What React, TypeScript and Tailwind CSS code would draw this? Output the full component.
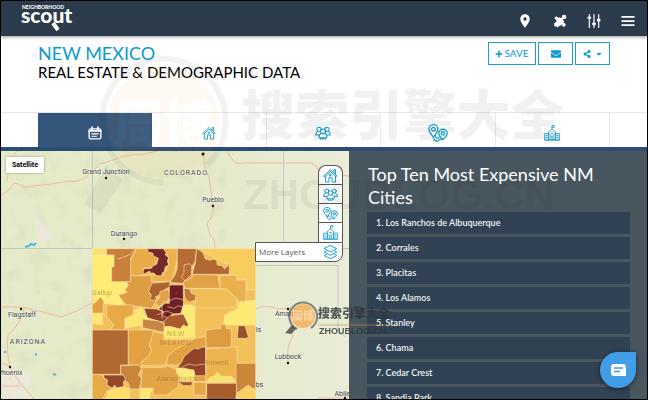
import type { ReactNode } from 'react'
import { FaCaretDown, FaEnvelope, FaPlus, FaShareAlt } from 'react-icons/fa'
import { MdLocationOn } from 'react-icons/md'

interface IconProps {
  className?: string
}

function Icon({ className, children }: IconProps & { children: ReactNode }) {
  return (
    <svg
      className={className}
      viewBox="0 0 24 24"
      fill="none"
      stroke="currentColor"
      strokeWidth="1.6"
      strokeLinejoin="round"
      strokeLinecap="round"
      aria-hidden="true"
    >
      {children}
    </svg>
  )
}

function HomeIcon({ className }: IconProps) {
  return (
    <Icon className={className}>
      <path d="M4 13v9.500h5.500v-7h5v7H20V13" />
      <path d="M1.500 12.500 12 2.500l10.500 10-1.500 1.500L12 5.500 3 14z" />
      <path d="M17.500 7V2.500H20V9.500M11 10.500h2v2h-2z" />
    </Icon>
  )
}

function PeopleIcon({ className }: IconProps) {
  return (
    <Icon className={className}>
      <circle cx="6" cy="6.500" r="3.200" />
      <circle cx="18" cy="6.500" r="3.200" />
      <circle cx="12" cy="9.500" r="3.600" />
      <path d="M4.500 9.500C2 10.500 1 12 1 15h5M19.500 9.500c2.500 1 3.500 2.500 3.500 5.500h-5" />
      <path d="M9.500 12.500C7 13.500 6 15.500 6 19h12c0-3.500-1-5.500-3.500-6.500M8 19v2h8v-2" />
    </Icon>
  )
}

function RouteIcon({ className }: IconProps) {
  return (
    <Icon className={className}>
      <path d="M6.500 17C3 12.500 1 10 1 7.500a5.500 5.500 0 0 1 11 0c0 2.500-2 5-5.500 9.500z" />
      <circle cx="6.500" cy="7.500" r="2.200" />
      <path d="M17.500 20c-3-3.500-4.500-5-4.500-7.500a4.900 4.900 0 0 1 10 0c0 2.500-2 4.500-5.500 7.500z" />
      <circle cx="17.800" cy="12.500" r="2" />
      <path d="M6.500 17c1 5 4 6 6.500 3.500 1.500-1.500 3-1.500 4.500-.5M9 15c.5 4 2 4 4 2" />
    </Icon>
  )
}

function SchoolIcon({ className }: IconProps) {
  return (
    <Icon className={className}>
      <path d="M1 22V13h6v9zM17 22v-9h6v9zM7 22V10l5-4 5 4v12zM0 22.500h24" strokeWidth="1.300" />
      <path d="M12 6V1h3.500v2.500H12M10.500 22v-5h3v5M10.500 12h3M3 16h2M3 19h2M19 16h2M19 19h2M9 15h1M14 15h1" strokeWidth="1.300" />
    </Icon>
  )
}

function LayersIcon({ className }: IconProps) {
  return (
    <Icon className={className}>
      <path d="m12 1 10 5-10 5L2 6z" />
      <path d="m5.500 9.500L2 11.500l10 5 10-5-3.500-2" />
      <path d="m5.500 15L2 17l10 5 10-5-3.500-2" />
    </Icon>
  )
}

function OverviewIcon({ className }: IconProps) {
  return (
    <Icon className={className}>
      <rect x="2" y="5" width="20" height="17" rx="2.500" strokeWidth="2.400" />
      <path d="M2 8.500h20M7 2v4M17 2v4" strokeWidth="3" />
      <path d="M6.500 13.500h11M6.500 17.500h8" strokeWidth="2" />
    </Icon>
  )
}

function PuzzleIcon({ className }: IconProps) {
  return (
    <Icon className={className}>
      <path d="M7 11.500 11.500 7l6 6L12 18.500z" fill="currentColor" strokeWidth="3" />
      <path d="M6 18l12-12M6.500 7l11.500 11" strokeWidth="4" />
      <g fill="currentColor" stroke="none">
        <circle cx="19" cy="5" r="3.800" />
        <circle cx="5.500" cy="7" r="2.800" />
        <circle cx="18.500" cy="18.500" r="3.200" />
        <path d="M1 17l5-4 6 6-4 4-2-2-2 1-2-2 1-1z" />
      </g>
    </Icon>
  )
}

function SlidersIcon({ className }: IconProps) {
  return (
    <Icon className={className}>
      <path d="M4 1v22M12 1v22M20 1v22" strokeWidth="2" />
      <path d="M3 6.500h2M11 17h2M19 10.500h2" strokeWidth="4.500" />
    </Icon>
  )
}

function Logo() {
  return (
    <a href="#" aria-label="Neighborhood Scout" className="text-white">
      <svg className="h-7 w-14 overflow-visible" viewBox="0 0 56 28" fill="currentColor" fontFamily="Lato, sans-serif">
        <text x="1" y="4" fontSize="5" fontWeight="900">NEIGHBORHOOD</text>
        <text x="0" y="18" fontSize="21" fontWeight="900">scout</text>
        <path d="m32 18 5 7" stroke="currentColor" strokeWidth="4" />
      </svg>
    </a>
  )
}

const tabs = [
  { label: 'Overview', icon: OverviewIcon, size: 'size-3.5' },
  { label: 'Real estate', icon: HomeIcon, size: 'size-3.5' },
  { label: 'Demographics', icon: PeopleIcon, size: 'size-4' },
  { label: 'Commute', icon: RouteIcon, size: 'size-5' },
  { label: 'Schools', icon: SchoolIcon, size: 'size-4' },
]

const layers = [
  { label: 'Real estate', icon: HomeIcon },
  { label: 'Demographics', icon: PeopleIcon },
  { label: 'Commute', icon: RouteIcon },
  { label: 'Schools', icon: SchoolIcon },
]

const cities = [
  'Los Ranchos de Albuquerque',
  'Corrales',
  'Placitas',
  'Los Alamos',
  'Stanley',
  'Chama',
  'Cedar Crest',
  'Sandia Park',
]

// [fill, points], drawn back to front
const regions: [string, string][] = [
  ['#f3c159', '7,11 497,11 497,470 7,470'],
  ['#fdec76', '7,30 72,30 72,110 110,110 112,122 104,135 112,142 85,150 100,165 100,180 82,182 60,175 10,178'],
  ['#f9e06a', '7,11 50,11 50,30 7,30'],
  ['#e9aa47', '138,11 172,11 178,22 190,25 205,40 195,55 190,65 160,70 160,92 122,92 122,45'],
  ['#c9803c', '50,11 138,11 122,40 122,110 65,110 65,65 72,65 72,30 50,30'],
  ['#efb24d', '220,11 262,11 262,45 256,70 245,110 185,110 185,92 218,92 235,60 235,35'],
  ['#762a28', '172,11 220,11 228,22 226,30 236,38 232,48 236,60 226,65 222,82 216,84 216,92 200,92 192,84 180,84 180,78 160,88 160,72 184,70 190,62 200,58 205,40 190,32 188,24 175,22'],
  ['#b76c34', '262,11 320,11 315,50 305,65 305,110 275,115 240,112 255,90 262,70'],
  ['#f8cc5d', '320,11 497,11 497,135 468,135 468,105 440,105 440,90 418,88 418,60'],
  ['#b16931', '320,11 330,16 340,25 346,42 362,46 370,42 380,46 382,60 396,62 404,72 418,58 418,88 305,88 316,55'],
  ['#de9c43', '122,92 185,92 185,110 210,110 178,130 178,145 200,165 185,190 130,183 115,185 100,170 85,150 112,142 104,135 115,122 110,110 122,110'],
  ['#e2a144', '305,88 385,90 385,105 390,118 390,130 285,130 280,112'],
  ['#ebb04b', '390,92 440,90 440,105 468,105 468,172 445,172 440,160 410,135 390,130'],
  ['#f1bd56', '285,130 410,132 440,160 440,188 315,188 315,165'],
  ['#fdea72', '445,172 497,165 497,240 400,240 405,210 445,190'],
  ['#e1a044', '7,178 18,170 32,155 42,170 38,205 7,205'],
  ['#fce873', '7,205 38,205 38,240 7,235'],
  ['#e8a946', '50,180 130,180 130,210 105,225 105,255 60,255 72,240 50,215'],
  ['#fce671', '105,220 130,210 135,195 155,185 165,210 185,222 190,250 155,252 155,240 105,250'],
  ['#ad6430', '185,115 240,110 240,125 218,138 210,150 196,155 200,165 180,165 184,150 176,140'],
  ['#dfa14a', '210,140 235,132 240,155 230,175 205,185 196,172 208,160'],
  ['#6f2027', '238,120 280,120 280,205 246,207 242,220 232,225 215,215 220,200 205,192 225,175 238,175'],
  ['#c27a3a', '282,130 300,132 304,145 318,150 316,165 298,172 285,160'],
  ['#8c4029', '162,190 200,192 220,200 218,212 242,222 250,238 205,228 185,222 172,218'],
  ['#fdea72', '280,180 305,180 315,188 315,280 222,280 222,245 260,245'],
  ['#a95c2d', '222,228 240,212 280,207 295,238 292,246 280,240 270,252 240,244 222,245'],
  ['#c98543', '158,222 205,228 222,235 222,262 190,255 158,248'],
  ['#b26831', '7,255 115,255 115,360 92,360 92,388 7,388'],
  ['#e3a142', '115,255 190,255 188,290 178,300 186,315 175,335 155,350 152,370 145,360 115,360'],
  ['#eaad49', '190,260 222,265 222,285 315,285 315,300 262,325 260,345 228,350 228,360 155,362 155,350 175,335 186,315 178,300'],
  ['#c9853e', '92,362 145,360 155,370 145,390 155,400 148,432 120,432 115,415 103,405 100,390 92,388'],
  ['#e4a344', '155,368 225,368 230,362 265,375 265,425 230,450 190,450 190,430 150,430 155,400'],
  ['#96482b', '40,390 100,390 106,402 100,412 102,425 80,430 74,420 66,430 50,420 52,405 42,400'],
  ['#e7aa49', '7,388 40,390 42,400 52,405 50,420 66,430 50,440 36,465 7,468'],
  ['#fbdf69', '50,440 75,430 102,425 120,435 115,465 40,468 55,450'],
  ['#fce771', '150,430 190,430 180,445 180,468 150,468'],
  ['#e3a242', '235,330 262,310 315,280 348,275 348,410 312,410 312,375 270,360 228,360'],
  ['#934529', '347,306 347,392 315,392 312,378 286,370 262,368 276,350 282,335 300,320 312,310 325,312 335,307'],
  ['#fdec78', '260,370 312,375 312,410 265,408 275,395 260,385'],
  ['#a55a2b', '265,410 308,410 305,422 280,422'],
  ['#df9b3f', '348,255 392,250 392,238 408,238 408,250 424,252 424,308 348,308'],
  ['#edb34f', '348,312 440,305 442,355 436,410 348,412 348,392'],
  ['#fbe06a', '350,412 360,396 372,394 382,382 394,394 425,394 436,410'],
  ['#97502c', '445,242 465,242 475,275 470,280 442,280'],
  ['#cb863c', '438,355 497,355 497,430 470,430 450,446 438,440'],
  ['#a95e2c', '350,415 440,415 438,468 350,468'],
  ['#f7d060', '440,446 475,420 497,440 497,468 438,468'],
  ['#e4a546', '312,412 348,412 348,450 312,450'],
]

const places = [
  { name: 'Grand Junction', x: 106, y: 174, dot: [106, 178] },
  { name: 'Pueblo', x: 213, y: 202, dot: [213, 206] },
  { name: 'Durango', x: 124, y: 236, dot: [124, 239] },
  { name: 'Flagstaff', x: 22, y: 317, dot: [21, 309] },
  { name: 'Phoenix', x: 10, y: 375, dot: [10, 367] },
  { name: 'Amarillo', x: 288, y: 316, dot: [288, 309] },
  { name: 'Lubbock', x: 288, y: 359, dot: [288, 363] },
  { name: 'Abilene', x: 346, y: 396, dot: [345, 398] },
]

function StateMap() {
  return (
    <svg
      className="absolute inset-0 size-full"
      viewBox="1 151 348 248"
      preserveAspectRatio="xMinYMin slice"
      role="img"
      aria-label="Map of New Mexico"
      fontFamily="Roboto, sans-serif"
    >
      <defs>
        <filter id="relief" x="0" y="0" width="100%" height="100%">
          <feTurbulence type="fractalNoise" baseFrequency="0.06" numOctaves="4" seed="8" />
          <feColorMatrix values="0 0 0 0 .66  0 0 0 0 .69  0 0 0 0 .5  2.6 0 0 0 -1.300" />
        </filter>
        <linearGradient id="land">
          <stop offset="0" stopColor="#e5ebc8" />
          <stop offset=".6" stopColor="#e5eaca" />
          <stop offset="1" stopColor="#e9ecd7" />
        </linearGradient>
      </defs>
      <rect x="1" y="151" width="348" height="248" fill="url(#land)" />
      <rect x="1" y="151" width="226" height="248" filter="url(#relief)" opacity=".5" />
      <path d="M36 214q10 14 18 22l-14 8q-8-14-4-30zM2 372q18-8 30 8l-6 18H2z" fill="#eee7df" opacity=".7" />
      <path d="M25 247l4-1 2-2 3 1 2-2M35 354l2 1M53 374l3 1M4 352h2" stroke="#56b9e3" strokeWidth="2" fill="none" />

      <g stroke="#c3c7bd" strokeWidth="1" fill="none">
        <path d="M92.500 151v98M1 248.500h91M283.500 151v90M256 248.500h93M256 265.500h82v66l7 5" />
      </g>
      <g stroke="#f1b99f" strokeWidth="1" fill="none">
        <path d="M1 195q8-3 13-12 6 1 10 4 25-2 45-6 8 2 17-4l14-13 16-5q15-6 25-4l16-4q7-3 11-5 5-2 8 6l4-8q12 2 23-1 15 0 21 4l8 12q4 6 12 4h65q6-1 9 7l10 4 21 2" />
        <path d="M7 181Q8 170 12 158l5-7M203 153q1 14 6 25 2 14 4 25 2 13-6 20l3 12q6 5 5 14" />
        <path d="M1 307h20q20 4 40 10 16-5 31-14M24 309q-4 16-16 26-2 18 2 31l-9-3M10 368l10 15 14 16M1 386h19M256 309q10-5 22 0l12-1q16 3 22 12M290 309q-1 15 3 27-7 10-5 26M318 398h30" />
      </g>

      <g fill="#45474d" fontSize="7" textAnchor="end">
        <text x="261" y="332">Clovis</text>
        <text x="263" y="387">Hobbs</text>
      </g>

      <g transform="translate(90 245) scale(.3333)" stroke="#fbe5b1" strokeWidth="1.800" strokeLinejoin="round">
        {regions.map(([fill, points]) => (
          <polygon key={points} fill={fill} points={points} />
        ))}
        <path d="M138 11l-18 18-38 14M282 60l16-4 12 12-4 30-20 10-12-12 8-14zM205 192l15-20 18-5 20-8 22 6M216 182v40M200 210l30-12 20 8M232 185l20 5 14-8 14 6M275 367l20-10 20 4 30-4" fill="none" />
        <g fill="#c41e25" stroke="none">
          <circle cx="260" cy="144" r="3" />
          <circle cx="204" cy="203" r="3" />
          <circle cx="228" cy="204" r="3" />
        </g>
      </g>

      <g fill="#8b642d" opacity=".5" fontSize="7" textAnchor="middle">
        <text x="176" y="336" letterSpacing="1">NEW</text>
        <text x="176" y="345" letterSpacing="1">MEXICO</text>
        <text x="216" y="365">Roswell</text>
        <text x="176" y="381">Alamogordo</text>
        <text x="102" y="295">Gallup</text>
        <text x="222" y="396">Carlsbad</text>
      </g>
      <g fill="#45474d" fontSize="7" textAnchor="middle" stroke="#f1f3e3" strokeWidth="1" paintOrder="stroke">
        {places.map((place) => (
          <g key={place.name}>
            <text x={place.x} y={place.y}>{place.name}</text>
            <circle cx={place.dot[0]} cy={place.dot[1]} r="1.200" fill="#111" stroke="none" />
          </g>
        ))}
        <text x="186" y="175" letterSpacing="1">COLORADO</text>
        <text x="28" y="344" letterSpacing="1">ARIZONA</text>
        <circle cx="203" cy="154" r="1.500" fill="#111" stroke="#f1b99f" />
      </g>
    </svg>
  )
}

function LayerControl() {
  return (
    <div className="absolute top-3.5 right-1.5 flex flex-col items-end text-[#1ba0cf]">
      <div className="overflow-hidden rounded-t-lg border border-b-0 border-[#555] bg-white">
        {layers.map(({ label, icon: LayerIcon }) => (
          <button
            key={label}
            aria-label={label}
            className="flex h-[19px] w-[23px] items-center justify-center border-b border-[#555] last:border-b-0"
          >
            <LayerIcon className="size-[15px]" />
          </button>
        ))}
      </div>
      <button className="flex h-5 w-[88px] items-center justify-between rounded-br-lg border border-[#555] bg-white pr-1 pl-[3px]">
        <span className="font-['Open_Sans',sans-serif] text-[8px] text-[#555]">More Layers</span>
        <LayersIcon className="size-[15px]" />
      </button>
    </div>
  )
}

function Watermark() {
  return (
    <svg
      className="pointer-events-none absolute inset-0 size-full"
      viewBox="0 0 648 400"
      preserveAspectRatio="xMinYMin slice"
      fontFamily="'Noto Sans CJK SC', sans-serif"
      fontWeight="900"
      aria-hidden="true"
    >
      <g opacity=".05">
        <circle cx="163" cy="122" r="56" fill="#f8a030" />
        <path d="M163 182a62 62 0 1 1 44-18" fill="none" stroke="#333" strokeWidth="6" />
        <path d="m106 164 16 16-22 33-17-9z" fill="#333" />
        <text x="113" y="141" fontSize="50" fill="#fff">周博</text>
      </g>
      <g fill="#222" opacity=".06">
        <text x="241" y="134" fontSize="54">搜索引擎大全</text>
        <text x="243" y="209" fontSize="42" fontFamily="'Liberation Sans', sans-serif">ZHOUBLOG.CN</text>
      </g>
      <circle cx="303" cy="316" r="12" fill="#f5a443" opacity=".7" />
      <path d="M297 329a14 14 0 1 1 14-1" fill="none" stroke="#555" strokeWidth="2" opacity=".7" />
      <path d="m292 325 4 4-5 5-6-1z" fill="#444" opacity=".8" />
      <text x="292" y="320" fontSize="11" fill="#fce0b3" opacity=".8">周博</text>
      <g fill="#303438" opacity=".8">
        <text x="318" y="318" fontSize="12">搜索引擎大全</text>
        <text x="319" y="334" fontSize="9" fontFamily="'Liberation Sans', sans-serif">ZHOUBLOG.CN</text>
      </g>
      <path d="M318 325h73" stroke="#c88b34" opacity=".6" />
    </svg>
  )
}

const actionButton = 'flex h-[23px] items-center justify-center border border-[#1ba0cf] bg-white text-[#0c9bcd]'

export default function App() {
  return (
    <div className="relative flex h-screen flex-col overflow-hidden border border-black bg-white font-['Lato',sans-serif]">
      <header className="z-10 flex h-[35px] shrink-0 items-center justify-between bg-[#2b3b4b] pr-3 pl-5 shadow-[0_1px_3px_rgba(0,0,0,0.4)]">
        <Logo />
        <nav className="flex items-center gap-5 pt-1 text-white">
          <button aria-label="Places"><MdLocationOn className="size-4" /></button>
          <button aria-label="Tools"><PuzzleIcon className="size-3.5" /></button>
          <button aria-label="Filters"><SlidersIcon className="size-3.5" /></button>
          <button aria-label="Menu">
            <Icon className="size-3.5"><path d="M2 5h20M2 12h20M2 19h20" strokeWidth="3" /></Icon>
          </button>
        </nav>
      </header>

      <div className="flex h-[76px] shrink-0 items-start justify-between px-[37px] pt-1.5">
        <h1 className="pt-0.5 text-[15px] leading-[19px] text-black">
          <span className="block text-lg leading-[19px] text-[#0c9bcd]">NEW MEXICO</span>
          REAL ESTATE &amp; DEMOGRAPHIC DATA
        </h1>
        <div className="flex gap-0.5">
          <button className={`${actionButton} w-12 gap-px text-[10px]`}>
            <FaPlus className="size-2" />
            SAVE
          </button>
          <button aria-label="Email" className={`${actionButton} w-[35px]`}>
            <FaEnvelope className="size-2.5" />
          </button>
          <button aria-label="Share" className={`${actionButton} w-[35px] gap-1`}>
            <FaShareAlt className="size-2" />
            <FaCaretDown className="size-2" />
          </button>
        </div>
      </div>

      <nav className="shrink-0 border-t border-b-4 border-t-[#e8e8e8] border-b-[#2b4d74] px-[37px]">
        <div className="grid h-[34px] grid-cols-5">
          {tabs.map(({ label, icon: TabIcon, size }, i) => (
            <button
              key={label}
              aria-label={label}
              className={`flex items-center justify-center pt-1.5 ${
                i === 0 ? 'bg-[#34567a] text-white' : 'border-r border-[#e8e8e8] text-[#1ba0cf]'
              }`}
            >
              <TabIcon className={size} />
            </button>
          ))}
        </div>
      </nav>

      <main className="flex min-h-0 flex-1">
        <section className="relative flex-1 overflow-hidden">
          <StateMap />
          <button className="absolute top-1.5 left-[5px] bg-white px-1.5 font-['Roboto',sans-serif] text-[7px] leading-4 font-bold text-black shadow-[0_0_2px_rgba(0,0,0,0.4)]">
            Satellite
          </button>
          <LayerControl />
        </section>

        <section className="w-[298px] shrink-0 overflow-hidden bg-[#485660] pt-3 pr-[17px] pl-[18px]">
          <h2 className="px-px text-lg leading-[23px] text-white">Top Ten Most Expensive NM Cities</h2>
          <ol className="mt-[3px] flex flex-col gap-[3px]">
            {cities.map((city, i) => (
              <li key={city} className="bg-[#304253] px-[9px] text-[9px] leading-[22px] font-semibold text-[#eef2f4]">
                {i + 1}. {city}
              </li>
            ))}
          </ol>
        </section>
      </main>

      <Watermark />

      <button
        aria-label="Open chat"
        className="absolute right-[11px] bottom-[11px] flex size-9 items-center justify-center rounded-full rounded-tr-sm bg-[#429de9] text-white shadow-[0_1px_5px_rgba(0,0,0,0.5)]"
      >
        <svg className="h-3 w-4" viewBox="0 0 16 12" fill="none" aria-hidden="true">
          <path d="M4 0h9a3 3 0 0 1 3 3v9H4a3 3 0 0 1-3-3V3a3 3 0 0 1 3-3z" fill="currentColor" />
          <path d="M4 4h9M4 7.500h6" stroke="#429de9" strokeWidth="1.300" />
        </svg>
      </button>
    </div>
  )
}
